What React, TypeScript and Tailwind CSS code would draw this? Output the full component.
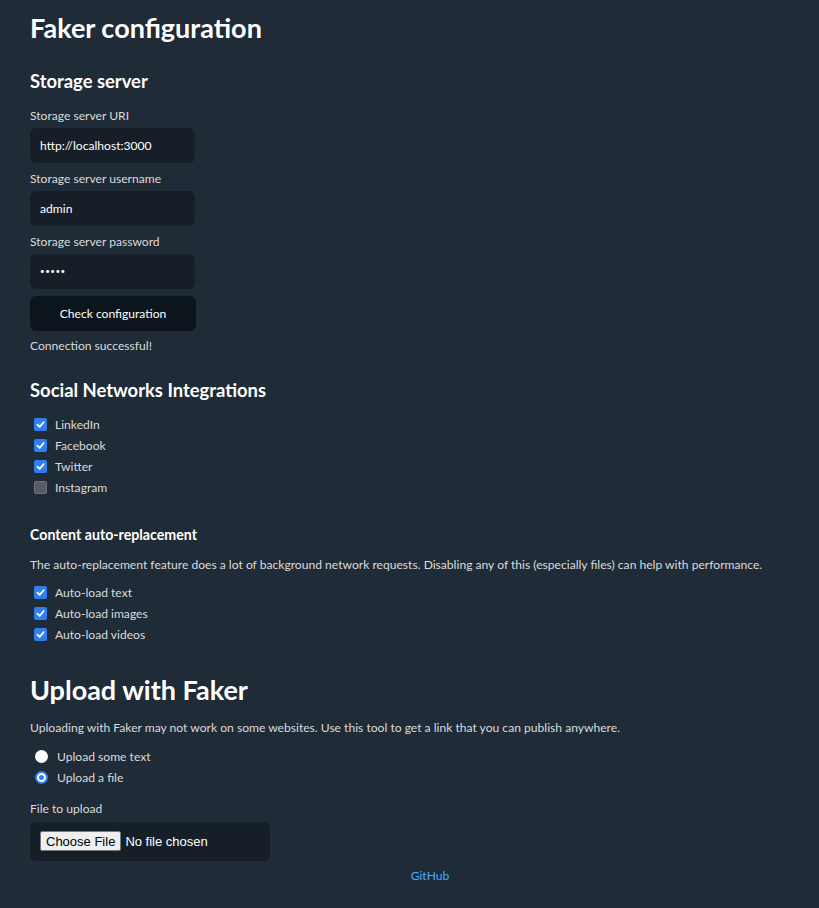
import React from "react";

function Check({ checked }: { checked: boolean }) {
  return checked ? (
    <span className="flex h-[13px] w-[13px] items-center justify-center rounded-[2px] bg-[#2f7ff0]">
      <svg width="9" height="9" viewBox="0 0 10 10" fill="none">
        <path d="M1.5 5.2 L4 7.6 L8.6 2.4" stroke="#ffffff" strokeWidth="1.9" strokeLinecap="round" strokeLinejoin="round" />
      </svg>
    </span>
  ) : (
    <span className="block h-[13px] w-[13px] rounded-[2px] border border-[#6d737a] bg-[#565c63]" />
  );
}

function Radio({ checked }: { checked: boolean }) {
  return checked ? (
    <span className="flex h-[13px] w-[13px] items-center justify-center rounded-full border-[2px] border-[#2f7ff0] bg-[#ffffff]">
      <span className="block h-[5px] w-[5px] rounded-full bg-[#2f7ff0]" />
    </span>
  ) : (
    <span className="block h-[13px] w-[13px] rounded-full bg-[#ffffff]" />
  );
}

function CheckRow({ label, checked }: { label: string; checked: boolean }) {
  return (
    <label className="flex h-[21px] items-center">
      <span className="ml-[4px] mr-[8px]">
        <Check checked={checked} />
      </span>
      <span>{label}</span>
    </label>
  );
}

function RadioRow({ label, checked }: { label: string; checked: boolean }) {
  return (
    <label className="flex h-[21px] items-center">
      <span className="ml-[5px] mr-[9px]">
        <Radio checked={checked} />
      </span>
      <span>{label}</span>
    </label>
  );
}

function Field({ label, value, first, password }: { label: string; value: string; first?: boolean; password?: boolean }) {
  return (
    <div className={first ? "" : "mt-[7px]"}>
      <div className="h-[17px] leading-[17px]">{label}</div>
      <div className="mt-[4px] flex h-[35px] w-[165px] items-center rounded-[6px] bg-[#161f27] px-[10px] text-[#ffffff]">
        {password ? <span className="text-[8px] tracking-[0.5px]">{value}</span> : value}
      </div>
    </div>
  );
}

export default function App() {
  return (
    <div
      className="min-h-screen w-full overflow-hidden bg-[#202b38] pl-[30px] text-[12.1px] leading-[17px] text-[#dbdbdb]"
      style={{ fontFamily: "Lato, 'Open Sans', sans-serif" }}
    >
      <div className="w-[800px] pb-[20px]">
        <h1 className="pt-[10px] text-[27px] font-bold leading-[36px] text-[#ffffff]">Faker configuration</h1>

        <h2 className="mt-[23px] text-[18.4px] font-bold leading-[25px] text-[#ffffff]">Storage server</h2>
        <div className="mt-[12.5px]">
          <Field label="Storage server URI" value="http://localhost:3000" first />
          <Field label="Storage server username" value="admin" />
          <Field label="Storage server password" value="•••••" password />
          <button className="mt-[7px] flex h-[35px] w-[166px] items-center justify-center rounded-[6px] bg-[#0c151c] text-[#ffffff]">
            Check configuration
          </button>
          <div className="mt-[6.5px]">Connection successful!</div>
        </div>

        <h2 className="mt-[24px] text-[18.4px] font-bold leading-[25px] text-[#ffffff]">Social Networks Integrations</h2>
        <div className="mt-[11px]">
          <CheckRow label="LinkedIn" checked />
          <CheckRow label="Facebook" checked />
          <CheckRow label="Twitter" checked />
          <CheckRow label="Instagram" checked={false} />
        </div>

        <h3 className="mt-[26.5px] text-[14.2px] font-bold leading-[20px] text-[#ffffff]">Content auto-replacement</h3>
        <p className="mt-[11.5px]">
          The auto-replacement feature does a lot of background network requests. Disabling any of this (especially files) can help with performance.
        </p>
        <div className="mt-[9px]">
          <CheckRow label="Auto-load text" checked />
          <CheckRow label="Auto-load images" checked />
          <CheckRow label="Auto-load videos" checked />
        </div>

        <h1 className="mt-[26.5px] text-[27px] font-bold leading-[36px] text-[#ffffff]">Upload with Faker</h1>
        <p className="mt-[11.5px]">
          Uploading with Faker may not work on some websites. Use this tool to get a link that you can publish anywhere.
        </p>
        <div className="mt-[10px]">
          <RadioRow label="Upload some text" checked={false} />
          <RadioRow label="Upload a file" checked />
        </div>

        <div className="mt-[12px]">File to upload</div>
        <div className="mt-[4.5px] flex h-[39px] w-[240px] items-center rounded-[6px] bg-[#161f27] pl-[10px]">
          <span
            className="flex h-[20px] items-center rounded-[2px] border border-[#767676] bg-[#efefef] px-[5px] text-[13px] text-[#000000]"
            style={{ fontFamily: "'Liberation Sans', Arial, sans-serif" }}
          >
            Choose File
          </span>
          <span
            className="ml-[4px] text-[13px] text-[#ffffff]"
            style={{ fontFamily: "'Liberation Sans', Arial, sans-serif" }}
          >
            No file chosen
          </span>
        </div>

        <div className="mt-[6.5px] flex justify-center">
          <a href="#" className="text-[#41adff]">GitHub</a>
        </div>
      </div>
    </div>
  );
}
